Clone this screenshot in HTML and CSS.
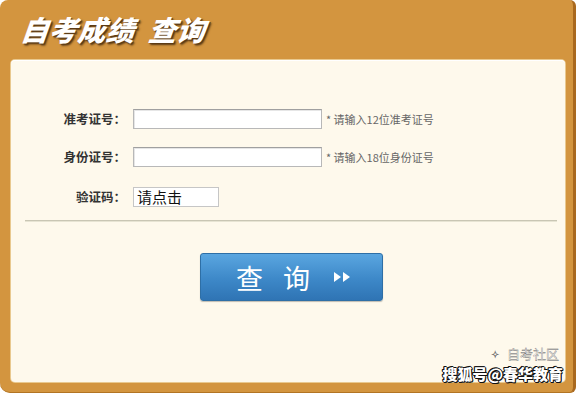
FILE: index.html
```html
<!DOCTYPE html>
<html lang="zh">
<head>
<meta charset="utf-8">
<link rel="stylesheet" href="styles.css">
</head>
<body>
<div class="frame">
  <div class="header"><h1 class="title">自考成绩&nbsp;&nbsp;查询</h1></div>
  <div class="panel">
    <div class="form">
      <div class="row">
        <span class="label">准考证号：</span>
        <span class="input"></span>
        <span class="hint">* 请输入12位准考证号</span>
      </div>
      <div class="row">
        <span class="label">身份证号：</span>
        <span class="input"></span>
        <span class="hint">* 请输入18位身份证号</span>
      </div>
      <div class="row row-code">
        <span class="label">验证码：</span>
        <span class="code">请点击</span>
      </div>
    </div>
    <div class="divider"></div>
    <div class="actions">
      <div class="btn"><span class="btn-text">查</span><span class="btn-text">询</span><span class="arrows"><i class="tri"></i><i class="tri"></i></span></div>
    </div>
    <div class="watermark">
      <div class="wm-top"><span class="wm-icon">&#10023;</span><span>自考社区</span></div>
      <div class="wm-main">搜狐号@春华教育</div>
    </div>
  </div>
</div>
</body>
</html>
```

FILE: styles.css
```css
html, body {
  margin: 0;
  padding: 0;
  background: #fff;
}
body {
  width: 580px;
  height: 394px;
  overflow: hidden;
  font-family: "Noto Sans CJK SC", "Noto Sans", sans-serif;
}
.frame {
  width: 576px;
  height: 393px;
  background: #d3953f;
  border-radius: 8px 6px 6px 10px;
  border-right: 3px solid #a9691f;
  border-bottom: 1px solid #b27424;
  display: flex;
  flex-direction: column;
  box-sizing: border-box;
}
.header {
  height: 60px;
  display: flex;
  align-items: center;
  padding-left: 21px;
  padding-bottom: 2px;
  box-sizing: border-box;
}
.title {
  margin: 0;
  color: #fff;
  font-size: 28px;
  font-weight: 900;
  font-style: italic;
  letter-spacing: 0.5px;
  text-shadow: 2px 2px 2px #5a3a15, 1px 1px 0 #7a5020;
  transform: skewX(-6deg);
}
.panel {
  position: relative;
  margin: 0 8px 0 11px;
  height: 322px;
  background: #fef9ec;
  border-radius: 4px;
  box-shadow: inset 0 1px 0 #fff, 0 0 0 1px #e9c98f;
}
.form {
  padding-top: 49px;
  display: flex;
  flex-direction: column;
  gap: 18px;
}
.row {
  display: flex;
  align-items: center;
  height: 20px;
}
.row-code {
  margin-top: 2px;
}
.label {
  width: 117px;
  text-align: right;
  font-size: 12.5px;
  font-weight: 700;
  color: #333;
  box-sizing: border-box;
  padding-right: 2px;
  line-height: 20px;
}
.input {
  margin-left: 5px;
  width: 189px;
  height: 20px;
  box-sizing: border-box;
  background: #fff;
  border: 1px solid #b8b8b8;
  border-top-color: #a0a0a0;
  box-shadow: inset 1px 1px 0 #e6e6e6;
}
.hint {
  margin-left: 4px;
  font-size: 11px;
  color: #666;
}
.code {
  margin-left: 5px;
  width: 86px;
  height: 20px;
  box-sizing: border-box;
  background: #fff;
  border: 1px solid #c6c6c6;
  font-size: 15px;
  line-height: 18px;
  padding-left: 3px;
  color: #111;
  font-weight: 400;
}
.divider {
  margin: 13px 8px 0 14px;
  height: 1px;
  background: #c9c6b4;
  box-shadow: 0 1px 0 #e7e4d3;
}
.actions {
  display: flex;
  padding-left: 189px;
  padding-top: 32px;
}
.btn {
  width: 183px;
  height: 48px;
  box-sizing: border-box;
  border-radius: 3px;
  background: linear-gradient(#5aa6e0, #3d88c8 55%, #2f74b4);
  border: 1px solid #2e6fa6;
  box-shadow: 0 1px 1px rgba(0,0,0,0.25);
  display: flex;
  align-items: center;
  padding-left: 35px;
  color: #fff;
}
.btn-text {
  font-size: 27px;
  font-weight: 400;
  margin-right: 20px;
  line-height: 1;
}
.arrows {
  margin-left: 4px;
  display: flex;
  gap: 2px;
  align-items: center;
}
.tri {
  display: block;
  width: 0;
  height: 0;
  border-top: 5px solid transparent;
  border-bottom: 5px solid transparent;
  border-left: 7px solid #fff;
}
.watermark {
  position: absolute;
  right: 2px;
  bottom: -2px;
  display: flex;
  flex-direction: column;
  align-items: flex-end;
  gap: 2px;
}
.wm-top {
  display: flex;
  align-items: center;
  gap: 8px;
  font-size: 13px;
  color: #fff;
  line-height: 16px;
  -webkit-text-stroke: 0.3px #555;
  padding-right: 4px;
}
.wm-icon {
  font-size: 10px;
  line-height: 16px;
  color: #ccc;
}
.wm-main {
  font-size: 15px;
  font-weight: 900;
  color: #fff;
  line-height: 20px;
  text-shadow: 1px 0 0 #111, -1px 0 0 #111, 0 1px 0 #111, 0 -1px 0 #111, 1px 1px 0 #111, -1px -1px 0 #111;
}
```
